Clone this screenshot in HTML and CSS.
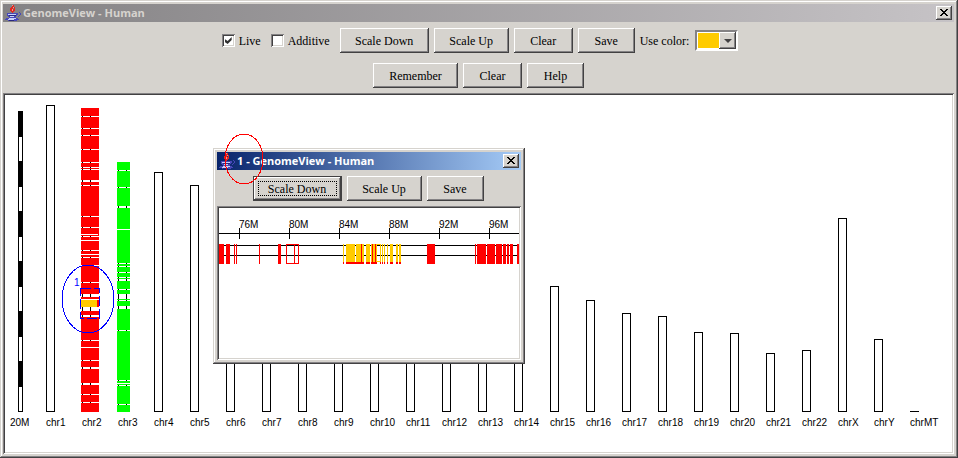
FILE: index.html
```html
<!DOCTYPE html>
<html lang="en">
<head>
<meta charset="utf-8">
<title>GenomeView - Human</title>
<link rel="stylesheet" href="styles.css">
</head>
<body>
<svg class="defs" width="0" height="0" aria-hidden="true">
  <symbol id="java" viewBox="0 0 16 16">
    <g shape-rendering="crispEdges" fill="none">
      <path stroke="#e02820" d="M8 .5h1M7 1.5h2M6 2.5h2M9 2.5h1M5 3.5h3M9 3.5h1M5 4.5h2M8 4.5h2M5 5.5h2M8 5.5h2M6 6.5h3M7 7.5h1"/>
      <path stroke="#f09890" d="M7 .5h1M8 2.5h1M7 4.5h1M7 5.5h1"/>
      <path stroke="#4848b8" d="M2 8.5h11M14 7.5h1M15 8.5h1M2 9.5h1M11 9.5h2M15 9.5h1M2 10.5h10M14 10.5h1M3 11.5h8M13 11.5h1M4 12.5h7M1 13.5h3M11 13.5h2M0 14.5h3M9 14.5h5M3 15.5h9"/>
      <path stroke="#c8d0f8" d="M3 9.5h8M5 11.5h4M4 13.5h7M3 14.5h6"/>
      <path stroke="#282880" d="M4 10.5h7M4 15.5h5"/>
    </g>
  </symbol>
  <symbol id="cross" viewBox="0 0 8 7">
    <path shape-rendering="crispEdges" fill="none" stroke="#000" d="M0 .5h2M6 .5h2M1 1.5h2M5 1.5h2M2 2.5h4M3 3.5h2M2 4.5h4M1 5.5h2M5 5.5h2M0 6.5h2M6 6.5h2"/>
  </symbol>
</svg>

<main class="window main-window">
  <header class="titlebar inactive">
    <svg class="app-icon" aria-hidden="true"><use href="#java"/></svg>
    <h1 class="title">GenomeView - Human</h1>
    <button class="close" aria-label="Close"><svg aria-hidden="true"><use href="#cross"/></svg></button>
  </header>

  <div class="toolbar options">
    <label class="check"><input type="checkbox" checked>Live</label>
    <label class="check"><input type="checkbox">Additive</label>
    <button class="btn w-down">Scale Down</button>
    <button class="btn w-up">Scale Up</button>
    <button class="btn w-clear">Clear</button>
    <button class="btn">Save</button>
    <label class="color-label" for="color">Use color:</label>
    <div class="color-picker">
      <select id="color"><option value="#ffcb00" aria-label="Orange"></option></select>
      <span class="arrow"></span>
    </div>
  </div>
  <div class="toolbar">
    <button class="btn w-remember">Remember</button>
    <button class="btn w-clear">Clear</button>
    <button class="btn">Help</button>
  </div>

  <section class="canvas genome">
    <div class="chart">
      <div class="col"><div class="scale"><i></i><i></i><i></i><i></i><i></i><i></i></div><span>20M</span></div>
      <div class="col"><div class="bar" style="height:307px"></div><span>chr1</span></div>
      <div class="col">
        <svg class="hits" width="18" height="304" shape-rendering="crispEdges">
          <path fill="#f00" d="M0 0h18v304H0z"/>
          <path fill="#fff" d="M0 8h18v1H0zM0 20h18v1H0zM0 27h18v1H0zM0 41h18v1H0zM0 54h18v1H0zM0 59h18v1H0zM0 61h18v1H0zM0 72h18v2H0zM0 77h18v1H0zM0 108h18v1H0zM0 119h18v1H0zM0 126h17v1H0zM0 128h18v1H0zM0 132h18v1H0zM0 142h18v1H0zM0 146h18v1H0zM0 149h18v1H0zM0 157h18v1H0zM0 174h18v1H0zM0 186h18v3H0zM0 191h18v1H0zM0 199h18v4H0zM0 207h18v2H0zM0 232h18v1H0zM0 239h18v1H0zM0 252h18v1H0zM0 259h18v2H0zM0 275h18v2H0zM0 286h18v1H0zM0 294h18v1H0z"/>
          <path fill="none" stroke="#000" d="M1.500 8v1m0 11v1m0 6v1m0 13v1m0 12v1m0 4v1m0 1v1m0 10v2m0 3v1m0 30v1m0 10v1m0 8v1m0 13v1m0 6v1m0 24v1m0 11v3m0 10v4m0 4v2m0 23v1m0 19v1m0 6v2m0 14v2m0 9v1m0 7v1M9.500 8v1m0 11v1m0 6v1m0 13v1m0 12v1m0 4v1m0 1v1m0 10v2m0 3v1m0 30v1m0 10v1m0 8v1m0 13v1m0 6v1m0 24v1m0 11v3m0 10v4m0 4v2m0 23v1m0 19v1m0 6v2m0 14v2m0 9v1m0 7v1"/>
          <path fill="#ffcb00" d="M0 192h16v7H0z"/>
        </svg>
        <span>chr2</span>
        <svg class="marker" width="54" height="70" aria-hidden="true">
          <ellipse cx="27" cy="35" rx="26" ry="34" fill="none" stroke="#00f" shape-rendering="crispEdges"/>
          <path fill="none" stroke="#00f" stroke-dasharray="10 3" shape-rendering="crispEdges" d="M19.500 24.500h19v30h-19z"/>
        </svg>
        <b class="marker-id">1</b>
      </div>
      <div class="col">
        <svg class="hits" width="13" height="250" shape-rendering="crispEdges">
          <path fill="#0f0" d="M0 0h13v250H0z"/>
          <path fill="#fff" d="M0 8h13v1H0zM0 25h13v1H0zM0 44h13v2H0zM0 67h13v1H0zM0 101h13v1H0zM0 104h13v1H0zM0 110h13v1H0zM0 115h13v1H0zM0 117h13v2H0zM0 127h13v1H0zM0 132h13v5H0zM0 138h13v1H0zM0 144h13v3H0zM0 168h13v1H0zM0 218h13v1H0zM0 221h13v1H0zM0 223h13v1H0zM0 242h13v1H0z"/>
          <path fill="none" stroke="#000" d="M1.500 8v1m0 16v1m0 18v2m0 55v1m0 2v1m0 5v1m0 4v1m0 1v2m0 8v1m0 4v5m0 1v1m0 5v3m0 21v1m0 49v1m0 4v1m0 18v1M9.500 8v1m0 16v1m0 18v2m0 55v1m0 2v1m0 5v1m0 4v1m0 1v2m0 8v1m0 4v5m0 1v1m0 5v3m0 21v1m0 49v1m0 4v1m0 18v1"/>
        </svg>
        <span>chr3</span>
      </div>
      <div class="col"><div class="bar" style="height:240px"></div><span>chr4</span></div>
      <div class="col"><div class="bar" style="height:227px"></div><span>chr5</span></div>
      <div class="col"><div class="bar" style="height:215px"></div><span>chr6</span></div>
      <div class="col"><div class="bar" style="height:199px"></div><span>chr7</span></div>
      <div class="col"><div class="bar" style="height:184px"></div><span>chr8</span></div>
      <div class="col"><div class="bar" style="height:174px"></div><span>chr9</span></div>
      <div class="col"><div class="bar" style="height:170px"></div><span>chr10</span></div>
      <div class="col"><div class="bar" style="height:169px"></div><span>chr11</span></div>
      <div class="col"><div class="bar" style="height:166px"></div><span>chr12</span></div>
      <div class="col"><div class="bar" style="height:144px"></div><span>chr13</span></div>
      <div class="col"><div class="bar" style="height:134px"></div><span>chr14</span></div>
      <div class="col"><div class="bar" style="height:126px"></div><span>chr15</span></div>
      <div class="col"><div class="bar" style="height:112px"></div><span>chr16</span></div>
      <div class="col"><div class="bar" style="height:99px"></div><span>chr17</span></div>
      <div class="col"><div class="bar" style="height:96px"></div><span>chr18</span></div>
      <div class="col"><div class="bar" style="height:80px"></div><span>chr19</span></div>
      <div class="col"><div class="bar" style="height:79px"></div><span>chr20</span></div>
      <div class="col"><div class="bar" style="height:59px"></div><span>chr21</span></div>
      <div class="col"><div class="bar" style="height:62px"></div><span>chr22</span></div>
      <div class="col"><div class="bar" style="height:194px"></div><span>chrX</span></div>
      <div class="col"><div class="bar" style="height:73px"></div><span>chrY</span></div>
      <div class="col"><div class="bar flat"></div><span>chrMT</span></div>
    </div>

    <section class="window detail-window">
      <header class="titlebar active">
        <svg class="app-icon" aria-hidden="true"><use href="#java"/></svg>
        <h2 class="title">1 - GenomeView - Human</h2>
        <button class="close" aria-label="Close"><svg aria-hidden="true"><use href="#cross"/></svg></button>
      </header>
      <div class="toolbar">
        <button class="btn w-down default">Scale Down</button>
        <button class="btn w-up">Scale Up</button>
        <button class="btn">Save</button>
      </div>
      <div class="canvas">
        <svg class="region" width="300" height="150" shape-rendering="crispEdges">
          <path fill="none" stroke="#000" d="M0 25.500h300M20.500 20v11M70.500 20v11M120.500 20v11M170.500 20v11M220.500 20v11M270.500 20v11M0 37.500h300M0 47.500h300"/>
          <g class="ticks">
            <text x="20" y="20">76M</text><text x="70" y="20">80M</text><text x="120" y="20">84M</text>
            <text x="170" y="20">88M</text><text x="220" y="20">92M</text><text x="270" y="20">96M</text>
          </g>
          <path fill="#f00" d="M0 36h5v20H0zM7 36h4v20H7zM15 36h1v20h-1zM17 36h1v20h-1zM40 36h1v20h-1zM59 36h3v20h-3zM208 36h8v20h-8zM256 36h1v20h-1zM258 36h9v20h-9zM268 36h8v20h-8zM277 36h6v20h-6zM284 36h3v20h-3zM288 36h2v20h-2zM291 36h3v20h-3zM298 36h2v20h-2z"/>
          <path fill="none" stroke="#f00" d="M67.500 36.500h12v19h-12zM75.500 36v20"/>
          <path fill="#ffcb00" d="M124 36h1v18h-1zM127 36h9v18h-9zM137 36h8v18h-8zM147 36h4v18h-4zM152 36h6v18h-6zM158 36h4v1h-4zM158 53h4v1h-4zM161 36h1v18h-1zM163 36h1v18h-1zM165 36h1v18h-1zM168 36h1v18h-1zM171 36h3v18h-3zM177 36h2v18h-2zM180 36h2v18h-2z"/>
          <path fill="#f00" d="M124 54h1v2h-1zM127 54h18v2h-18zM142 36h1v18h-1zM147 54h4v2h-4zM152 54h6v2h-6zM153 36h1v18h-1zM156 36h1v18h-1zM161 54h1v2h-1zM163 54h1v2h-1zM165 54h1v2h-1zM168 54h1v2h-1zM171 54h3v2h-3zM177 54h2v2h-2zM180 54h2v2h-2z"/>
        </svg>
      </div>
      <svg class="ring" width="40" height="52" aria-hidden="true">
        <ellipse cx="20" cy="26" rx="19" ry="25" fill="none" stroke="#f00" shape-rendering="crispEdges"/>
      </svg>
    </section>
  </section>
</main>
</body>
</html>
```
FILE: styles.css
```css
* { box-sizing: border-box; }

:root {
  --face: #d6d3ce;
  --shade: #848284;
  --dark: #424142;
}

body {
  margin: 0;
  background: var(--face);
  color: #000;
  font: 12px/14px "Liberation Serif", serif;
}

.defs { position: absolute; }

/* Raised window frame */
.window {
  display: flex;
  flex-direction: column;
  padding: 4px;
  background: var(--face);
  box-shadow:
    inset -1px -1px var(--dark),
    inset 1px 1px var(--face),
    inset -2px -2px var(--shade),
    inset 2px 2px #fff;
}

.main-window {
  min-height: 100vh;
  padding-left: 3px;
}

.titlebar {
  display: flex;
  align-items: center;
  gap: 2px;
  height: 18px;
  margin-bottom: 1px;
  padding: 0 2px;
}

.inactive {
  background: linear-gradient(to right, #848284, #c6c3c6);
  color: var(--face);
}

.active {
  background: linear-gradient(to right, #08246b, #a5cbf7);
  color: #fff;
}

.app-icon {
  flex: none;
  width: 16px;
  height: 16px;
}

.title {
  flex: 1;
  margin: 0;
  font: bold 11px/16px "Open Sans", sans-serif;
}

.close {
  display: grid;
  place-items: center;
  flex: none;
  width: 16px;
  height: 14px;
  padding: 0 1px 1px 0;
  border: 0;
  background: var(--face);
  box-shadow: inset -1px -1px var(--dark), inset 1px 1px #fff, inset -2px -2px var(--shade);
}

.close svg { width: 8px; height: 7px; }

.toolbar {
  display: flex;
  justify-content: center;
  align-items: center;
  gap: 5px;
  padding: 5px 0;
}

.options { padding-left: 3px; }

.btn {
  min-width: 57px;
  height: 25px;
  padding: 0;
  border: 0;
  background: var(--face);
  box-shadow: inset -1px -1px var(--dark), inset 1px 1px #fff, inset -2px -2px var(--shade);
  color: #000;
  font: inherit;
}

.w-down { min-width: 89px; }
.w-up { min-width: 75px; }
.w-clear { min-width: 59px; }
.w-remember { min-width: 85px; }

.default {
  border: 1px solid var(--dark);
  outline: 1px dotted #000;
  outline-offset: -6px;
}

.check {
  display: flex;
  align-items: center;
  gap: 4px;
  padding-right: 5px;
}

.check input {
  appearance: none;
  width: 13px;
  height: 13px;
  margin: 0;
  background: #fff;
  box-shadow: inset 1px 1px var(--shade), inset -1px -1px #fff, inset 2px 2px var(--dark), inset -2px -2px var(--face);
}

.check input:checked::before {
  content: "";
  display: block;
  width: 7px;
  height: 7px;
  margin: 3px;
  background: #303030;
  clip-path: polygon(0 2px, 3px 4px, 7px 0, 7px 3px, 3px 7px, 0 5px);
}

.color-picker {
  position: relative;
  width: 43px;
  height: 21px;
  margin-left: 1px;
  border: 2px solid;
  border-color: var(--shade) #fff #fff var(--shade);
}

.color-picker select {
  appearance: none;
  display: block;
  width: 39px;
  height: 17px;
  border: 1px solid #fff;
  border-radius: 0;
  background: #ffcb00;
}

.arrow {
  position: absolute;
  top: 0;
  right: 0;
  display: grid;
  place-items: center;
  width: 17px;
  height: 17px;
  background: var(--face);
  box-shadow: inset -1px -1px var(--dark), inset 1px 1px #fff, inset -2px -2px var(--shade);
  pointer-events: none;
}

.arrow::before {
  content: "";
  border: 4px solid transparent;
  border-top-color: var(--dark);
  border-bottom: 0;
}

/* Sunken drawing area */
.canvas {
  padding: 2px;
  background: #fff;
  box-shadow: inset 1px 1px var(--shade), inset -1px -1px #fff, inset 2px 2px var(--dark), inset -2px -2px var(--face);
}

.genome {
  position: relative;
  flex: 1;
}

.chart {
  display: flex;
  align-items: flex-end;
  padding: 10px 0 0 5px;
}

.col {
  position: relative;
  flex: 0 0 36px;
  font: 10px/12px "Liberation Sans", sans-serif;
}

.col > span {
  display: block;
  margin-top: 5px;
}

.bar {
  width: 9px;
  border: 1px solid #000;
}

.flat {
  height: 1px;
  border-width: 1px 0 0;
}

.scale {
  width: 5px;
  margin-left: 8px;
  border: 1px solid #000;
  border-top: 0;
}

.scale i {
  display: block;
  box-sizing: content-box;
  height: 24px;
  border-top: 26px solid #000;
}

.hits {
  display: block;
  margin-left: -1px;
}

.marker {
  position: absolute;
  left: -21px;
  bottom: 95px;
}

.marker-id {
  position: absolute;
  left: -8px;
  bottom: 140px;
  color: #00f;
  font-weight: normal;
}

/* Floating close-up of the selected region */
.detail-window {
  position: absolute;
  left: 210px;
  top: 55px;
}

.detail-window .toolbar { padding-right: 2px; }

.ring {
  position: absolute;
  left: 11px;
  top: -15px;
}

.region { display: block; }

.ticks {
  font: 10px "Liberation Sans", sans-serif;
}
```
